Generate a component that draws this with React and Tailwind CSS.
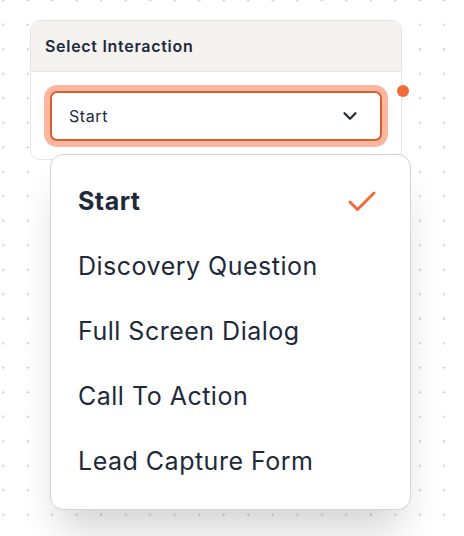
import React from "react";

function Check() {
  return (
    <svg width="36" height="36" viewBox="0 0 24 24" fill="none" stroke="#f06a3c" strokeWidth="2" strokeLinecap="round" strokeLinejoin="round">
      <path d="M20 6 9 17l-5-5" />
    </svg>
  );
}

function Chevron() {
  return (
    <svg width="22" height="22" viewBox="0 0 24 24" fill="none" stroke="#1e293b" strokeWidth="2.4" strokeLinecap="round" strokeLinejoin="round">
      <path d="m6 9 6 6 6-6" />
    </svg>
  );
}

const items = ["Start", "Discovery Question", "Full Screen Dialog", "Call To Action", "Lead Capture Form"];

export default function App() {
  return (
    <div
      className="w-full h-[536px] overflow-hidden bg-white pt-[20px] pl-[30px] bg-[radial-gradient(circle,#c9c9c9_0.9px,transparent_1.2px)] bg-[size:24.5px_24.5px] bg-[position:-9px_-12px]"
      style={{ fontFamily: "Inter, 'Noto Sans', sans-serif" }}
    >
      <div className="relative w-[372px] rounded-[10px] border border-[#e6e6e6] bg-white">
        <div className="h-[51px] rounded-t-[10px] bg-[#f4f3f0] border-b border-[#e6e6e6] px-[14px] flex items-center text-[16px] font-semibold text-[#1e293b] tracking-[0.7px]">
          Select Interaction
        </div>
        <div className="px-[19px] pt-[19px] pb-[18px]">
          <div className="h-[50px] rounded-[7px] border-2 border-[#d65f33] ring-[6px] ring-[#fdb7a0] bg-white flex items-center justify-between pl-[17px] pr-[19px]">
            <span className="text-[16px] text-[#1e293b] tracking-[0.6px]">Start</span>
            <Chevron />
          </div>
        </div>
        <div className="absolute left-[366px] top-[64px] w-[12px] h-[12px] rounded-full bg-[#f4693a]" />
        <div className="absolute left-[19px] top-[133px] w-[361px] h-[356px] rounded-[13px] border border-[#d4d4d4] bg-white shadow-[0_28px_40px_-10px_rgba(0,0,0,0.18)] py-[14px] pl-[27px] pr-[30px] flex flex-col">
          {items.map((it, i) => (
            <div key={it} className="h-[65px] flex items-center justify-between">
              <span className={"text-[25px] text-[#1e293b] tracking-[0.5px] " + (i === 0 ? "font-bold" : "font-normal")}>{it}</span>
              {i === 0 && <Check />}
            </div>
          ))}
        </div>
      </div>
    </div>
  );
}
